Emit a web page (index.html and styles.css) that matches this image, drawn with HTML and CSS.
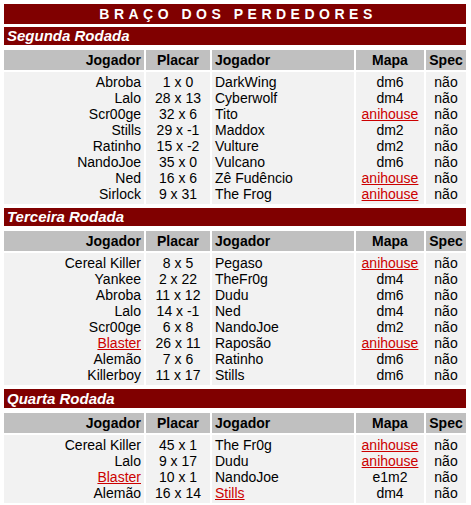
FILE: index.html
```html
<!DOCTYPE html>
<html>
<head>
<meta charset="utf-8">
<link rel="stylesheet" href="styles.css">
</head>
<body>
<div class="page">
  <div class="title">BRAÇO DOS PERDEDORES</div>

  <section class="round">
    <div class="round-bar">Segunda Rodada</div>
    <div class="grid">
      <div class="hd right">Jogador</div>
      <div class="hd center">Placar</div>
      <div class="hd left">Jogador</div>
      <div class="hd center">Mapa</div>
      <div class="hd center">Spec</div>
      <div class="cell right">
        <div>Abroba</div><div>Lalo</div><div>Scr00ge</div><div>Stills</div><div>Ratinho</div><div>NandoJoe</div><div>Ned</div><div>Sirlock</div>
      </div>
      <div class="cell center">
        <div>1 x 0</div><div>28 x 13</div><div>32 x 6</div><div>29 x -1</div><div>15 x -2</div><div>35 x 0</div><div>16 x 6</div><div>9 x 31</div>
      </div>
      <div class="cell left">
        <div>DarkWing</div><div>Cyberwolf</div><div>Tito</div><div>Maddox</div><div>Vulture</div><div>Vulcano</div><div>Zê Fudêncio</div><div>The Frog</div>
      </div>
      <div class="cell center">
        <div>dm6</div><div>dm4</div><div><a href="#">anihouse</a></div><div>dm2</div><div>dm2</div><div>dm6</div><div><a href="#">anihouse</a></div><div><a href="#">anihouse</a></div>
      </div>
      <div class="cell center">
        <div>não</div><div>não</div><div>não</div><div>não</div><div>não</div><div>não</div><div>não</div><div>não</div>
      </div>
    </div>
  </section>

  <section class="round">
    <div class="round-bar">Terceira Rodada</div>
    <div class="grid">
      <div class="hd right">Jogador</div>
      <div class="hd center">Placar</div>
      <div class="hd left">Jogador</div>
      <div class="hd center">Mapa</div>
      <div class="hd center">Spec</div>
      <div class="cell right">
        <div>Cereal Killer</div><div>Yankee</div><div>Abroba</div><div>Lalo</div><div>Scr00ge</div><div><a href="#">Blaster</a></div><div>Alemão</div><div>Killerboy</div>
      </div>
      <div class="cell center">
        <div>8 x 5</div><div>2 x 22</div><div>11 x 12</div><div>14 x -1</div><div>6 x 8</div><div>26 x 11</div><div>7 x 6</div><div>11 x 17</div>
      </div>
      <div class="cell left">
        <div>Pegaso</div><div>TheFr0g</div><div>Dudu</div><div>Ned</div><div>NandoJoe</div><div>Raposão</div><div>Ratinho</div><div>Stills</div>
      </div>
      <div class="cell center">
        <div><a href="#">anihouse</a></div><div>dm4</div><div>dm6</div><div>dm4</div><div>dm2</div><div><a href="#">anihouse</a></div><div>dm6</div><div>dm6</div>
      </div>
      <div class="cell center">
        <div>não</div><div>não</div><div>não</div><div>não</div><div>não</div><div>não</div><div>não</div><div>não</div>
      </div>
    </div>
  </section>

  <section class="round round-last">
    <div class="round-bar">Quarta Rodada</div>
    <div class="grid">
      <div class="hd right">Jogador</div>
      <div class="hd center">Placar</div>
      <div class="hd left">Jogador</div>
      <div class="hd center">Mapa</div>
      <div class="hd center">Spec</div>
      <div class="cell right">
        <div>Cereal Killer</div><div>Lalo</div><div><a href="#">Blaster</a></div><div>Alemão</div>
      </div>
      <div class="cell center">
        <div>45 x 1</div><div>9 x 17</div><div>10 x 1</div><div>16 x 14</div>
      </div>
      <div class="cell left">
        <div>The Fr0g</div><div>Dudu</div><div>NandoJoe</div><div><a href="#">Stills</a></div>
      </div>
      <div class="cell center">
        <div><a href="#">anihouse</a></div><div><a href="#">anihouse</a></div><div>e1m2</div><div>dm4</div>
      </div>
      <div class="cell center">
        <div>não</div><div>não</div><div>não</div><div>não</div>
      </div>
    </div>
  </section>
</div>
</body>
</html>
```
FILE: styles.css
```css
html, body {
  margin: 0;
  padding: 0;
  background: #ffffff;
}
body {
  padding: 4px;
  font-family: "Liberation Sans", Arial, sans-serif;
  font-size: 14px;
  color: #000000;
}
.page {
  width: 462px;
}
.title {
  height: 20px;
  line-height: 20px;
  background: #800000;
  color: #ffffff;
  font-weight: bold;
  font-size: 14px;
  letter-spacing: 4.5px;
  text-align: center;
  padding-left: 6px;
  margin-bottom: 3px;
}
.round {
  margin-bottom: 4px;
}
.round-last {
  margin-top: 1px;
}
.round-bar {
  height: 18px;
  line-height: 18px;
  background: #800000;
  color: #ffffff;
  font-weight: bold;
  font-style: italic;
  font-size: 15px;
  padding-left: 3px;
  margin-bottom: 5px;
}
.round-last .round-bar {
  height: 19px;
  line-height: 19px;
}
.grid {
  display: grid;
  grid-template-columns: 140px 64px 142px 68px 40px;
  column-gap: 2px;
  row-gap: 2px;
}
.hd {
  height: 20px;
  line-height: 20px;
  background: #c0c0c0;
  font-weight: bold;
  padding: 0 3px;
}
.cell {
  background: #f2f2f2;
  padding: 2px 3px;
  line-height: 16px;
}
.right { text-align: right; }
.center { text-align: center; }
.left { text-align: left; }
a {
  color: #cc0000;
  text-decoration: underline;
}
```
